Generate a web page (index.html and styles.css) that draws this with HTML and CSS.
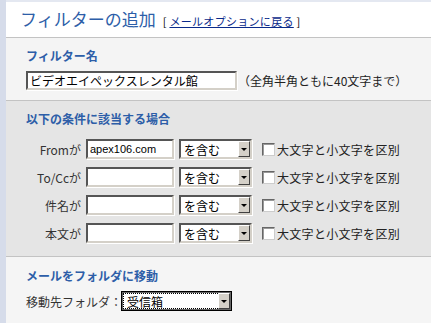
FILE: index.html
```html
<!DOCTYPE html>
<html lang="ja">
<head>
    <meta charset="UTF-8">
    <meta name="viewport" content="width=device-width, initial-scale=1.0">
    <title>フィルターの追加</title>
    <link rel="stylesheet" href="styles.css">
</head>
<body>
    <div class="side"></div>

    <div class="main">
        <div class="header">
            <h1 class="title">フィルターの追加</h1>
            <span class="back">[ <a href="#">メールオプションに戻る</a> ]</span>
        </div>

        <div class="section name">
            <h2 class="sec-title">フィルター名</h2>
            <div class="name-row">
                <input type="text" class="field wide" value="ビデオエイペックスレンタル館">
                <span class="note">（全角半角ともに40文字まで）</span>
            </div>
        </div>

        <div class="section cond">
            <h2 class="sec-title">以下の条件に該当する場合</h2>
            <div class="rows">
                <div class="row">
                    <label class="lbl">Fromが</label>
                    <input type="text" class="field latin" value="apex106.com">
                    <span class="sel"><select><option>を含む</option></select><i class="arrow"></i></span>
                    <span class="check"></span><span class="ctext">大文字と小文字を区別</span>
                </div>
                <div class="row">
                    <label class="lbl">To/Ccが</label>
                    <input type="text" class="field">
                    <span class="sel"><select><option>を含む</option></select><i class="arrow"></i></span>
                    <span class="check"></span><span class="ctext">大文字と小文字を区別</span>
                </div>
                <div class="row">
                    <label class="lbl">件名が</label>
                    <input type="text" class="field">
                    <span class="sel"><select><option>を含む</option></select><i class="arrow"></i></span>
                    <span class="check"></span><span class="ctext">大文字と小文字を区別</span>
                </div>
                <div class="row">
                    <label class="lbl">本文が</label>
                    <input type="text" class="field">
                    <span class="sel"><select><option>を含む</option></select><i class="arrow"></i></span>
                    <span class="check"></span><span class="ctext">大文字と小文字を区別</span>
                </div>
            </div>
        </div>

        <div class="section move">
            <h2 class="sec-title">メールをフォルダに移動</h2>
            <div class="move-row">
                <span class="move-lbl">移動先フォルダ：</span>
                <span class="sel folder"><select><option>受信箱</option></select><i class="arrow"></i></span>
            </div>
        </div>
    </div>
</body>
</html>
```

FILE: styles.css
```css
* {
    margin: 0;
    padding: 0;
    box-sizing: border-box;
}
body {
    display: flex;
    height: 100vh;
    overflow: hidden;
    background-color: #f5f5f5;
    font-family: "Noto Sans CJK JP", "Liberation Sans", sans-serif;
    font-size: 12px;
    color: #222;
}
.side {
    width: 6px;
    background-color: #d6dcea;
}
.main {
    flex: 1;
    border-top: 2px solid #e4e8f1;
}

/* header */
.header {
    height: 36px;
    padding: 5px 0 0 14px;
    background-color: #fff;
    border-bottom: 1px solid #c3c3c3;
    display: flex;
    align-items: baseline;
}
.title {
    font-size: 17px;
    font-weight: normal;
    line-height: 24px;
    color: #2d5ea8;
}
.back {
    margin-left: 7px;
    font-size: 11px;
    letter-spacing: 0.3px;
    color: #000;
}
.back a {
    color: #0a2a8a;
}

/* sections */
.section {
    padding-left: 20px;
}
.sec-title {
    font-size: 12px;
    font-weight: bold;
    line-height: 16px;
    color: #2d5ea8;
}
.name {
    height: 63px;
    padding-top: 10px;
    background-color: #f4f4f4;
    border-bottom: 1px solid #c3c3c3;
}
.name-row {
    margin-top: 7px;
    display: flex;
    align-items: center;
}
.cond {
    height: 156px;
    padding-top: 10px;
    background-color: #e5e5e5;
    border-bottom: 1px solid #c3c3c3;
}
.move {
    padding-top: 11px;
}

/* form controls */
.field {
    width: 88px;
    height: 20px;
    padding: 0 2px;
    font-family: inherit;
    font-size: 12px;
    color: #000;
    background-color: #fff;
    border: 2px solid;
    border-color: #555 #d4d0c8 #d4d0c8 #555;
    box-shadow: 1px 1px 0 #fff;
}
.field.wide {
    width: 211px;
    height: 19px;
}
.field.latin {
    font-family: "Liberation Sans", sans-serif;
    font-size: 11px;
}
.note {
    margin-left: 1px;
}
.rows {
    margin-top: 12px;
    display: flex;
    flex-direction: column;
    gap: 8px;
}
.row {
    display: flex;
    align-items: center;
    height: 20px;
}
.lbl {
    width: 55px;
    margin-right: 5px;
    text-align: right;
    color: #333;
}
.sel {
    position: relative;
    margin-left: 5px;
    width: 73px;
    height: 20px;
}
.sel select {
    appearance: none;
    width: 100%;
    height: 100%;
    padding-left: 3px;
    font-family: inherit;
    font-size: 12px;
    color: #000;
    background-color: #fff;
    border: 2px solid;
    border-color: #555 #d4d0c8 #d4d0c8 #555;
    box-shadow: 1px 1px 0 #fff;
    outline: none;
}
.arrow {
    position: absolute;
    top: 2px;
    right: 2px;
    width: 12px;
    height: 16px;
    background-color: #d4d0c8;
    border: 1px solid;
    border-color: #fff #404040 #404040 #fff;
}
.arrow::after {
    content: "";
    position: absolute;
    left: 2px;
    top: 6px;
    border-left: 3px solid transparent;
    border-right: 3px solid transparent;
    border-top: 3px solid #000;
}
.check {
    width: 13px;
    height: 13px;
    margin-left: 10px;
    background-color: #fff;
    border: 1px solid;
    border-color: #666 #ccc #ccc #666;
    box-shadow: inset 1px 1px 0 #999;
}
.ctext {
    margin-left: 2px;
    letter-spacing: 0.3px;
}
.move-row {
    margin-top: 7px;
    display: flex;
    align-items: center;
    height: 20px;
    color: #333;
}
.move-lbl {
    width: 95px;
    white-space: nowrap;
}
.sel.folder {
    margin-left: 0;
    width: 111px;
}
.sel.folder select {
    border: 1px solid #000;
    box-shadow: inset 0 0 0 1px #666;
    outline: 1px dotted #000;
    outline-offset: -3px;
    padding-left: 5px;
}
```
